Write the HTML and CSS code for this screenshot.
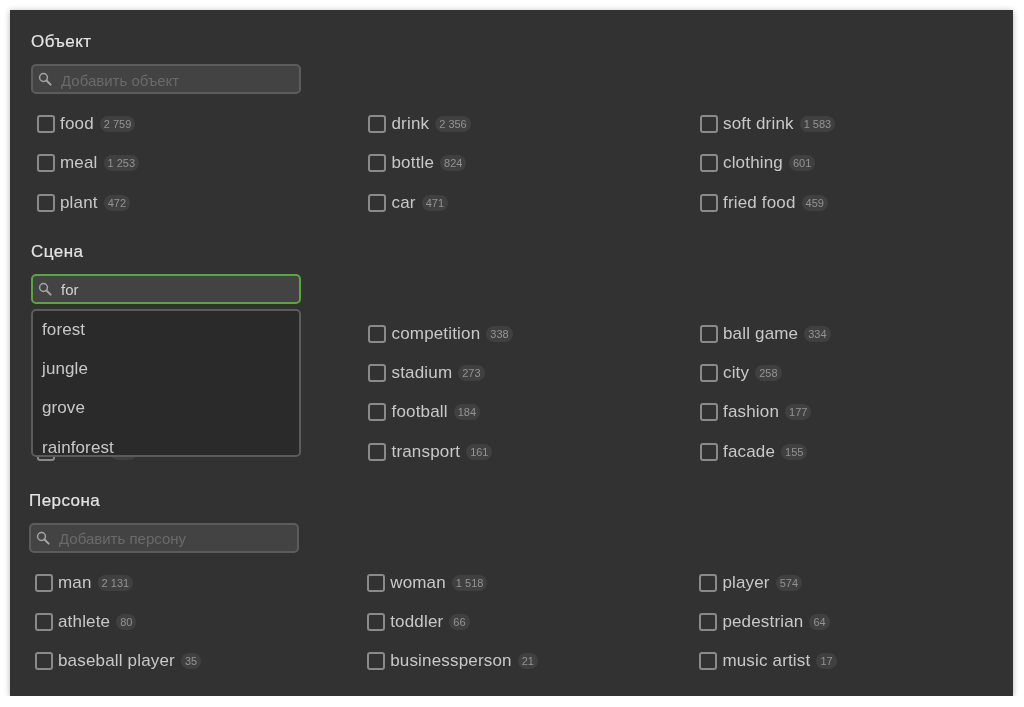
FILE: index.html
```html
<!DOCTYPE html>
<html lang="en">
<head>
    <meta charset="UTF-8">
    <meta name="viewport" content="width=device-width, initial-scale=1.0">
    <title>Фильтры</title>
    <link rel="stylesheet" href="styles.css">
</head>
<body>

    <svg class="icon-defs" width="0" height="0">
        <symbol id="search" viewBox="0 0 14 14">
            <circle cx="5.5" cy="5.5" r="3.9" fill="none" stroke="currentColor" stroke-width="1.5"/>
            <path d="M8.5 8.5 L12.6 12.6" fill="none" stroke="currentColor" stroke-width="2" stroke-linecap="round"/>
        </symbol>
    </svg>

    <div class="panel">
        <!-- Object -->
        <section class="group">
            <h2>Объект</h2>
            <div class="search">
                <svg class="search-icon"><use href="#search"/></svg>
                <input class="search-input" type="text" placeholder="Добавить объект">
            </div>
            <div class="tags">
                <label class="tag"><span class="box"></span>food<span class="count">2 759</span></label>
                <label class="tag"><span class="box"></span>drink<span class="count">2 356</span></label>
                <label class="tag"><span class="box"></span>soft drink<span class="count">1 583</span></label>
                <label class="tag"><span class="box"></span>meal<span class="count">1 253</span></label>
                <label class="tag"><span class="box"></span>bottle<span class="count">824</span></label>
                <label class="tag"><span class="box"></span>clothing<span class="count">601</span></label>
                <label class="tag"><span class="box"></span>plant<span class="count">472</span></label>
                <label class="tag"><span class="box"></span>car<span class="count">471</span></label>
                <label class="tag"><span class="box"></span>fried food<span class="count">459</span></label>
            </div>
        </section>

        <!-- Scene, the dropdown is open here -->
        <section class="group">
            <h2>Сцена</h2>
            <div class="search search-active">
                <svg class="search-icon"><use href="#search"/></svg>
                <input class="search-input" type="text" value="for">
                <ul class="dropdown">
                    <li>forest</li>
                    <li>jungle</li>
                    <li>grove</li>
                    <li>rainforest</li>
                </ul>
            </div>
            <div class="tags">
                <div class="tag"></div>
                <label class="tag"><span class="box"></span>competition<span class="count">338</span></label>
                <label class="tag"><span class="box"></span>ball game<span class="count">334</span></label>
                <div class="tag"></div>
                <label class="tag"><span class="box"></span>stadium<span class="count">273</span></label>
                <label class="tag"><span class="box"></span>city<span class="count">258</span></label>
                <div class="tag"></div>
                <label class="tag"><span class="box"></span>football<span class="count">184</span></label>
                <label class="tag"><span class="box"></span>fashion<span class="count">177</span></label>
                <label class="tag"><span class="box"></span>arena<span class="count">170</span></label>
                <label class="tag"><span class="box"></span>transport<span class="count">161</span></label>
                <label class="tag"><span class="box"></span>facade<span class="count">155</span></label>
            </div>
        </section>

        <!-- Person -->
        <section class="group group-person">
            <h2>Персона</h2>
            <div class="search">
                <svg class="search-icon"><use href="#search"/></svg>
                <input class="search-input" type="text" placeholder="Добавить персону">
            </div>
            <div class="tags">
                <label class="tag"><span class="box"></span>man<span class="count">2 131</span></label>
                <label class="tag"><span class="box"></span>woman<span class="count">1 518</span></label>
                <label class="tag"><span class="box"></span>player<span class="count">574</span></label>
                <label class="tag"><span class="box"></span>athlete<span class="count">80</span></label>
                <label class="tag"><span class="box"></span>toddler<span class="count">66</span></label>
                <label class="tag"><span class="box"></span>pedestrian<span class="count">64</span></label>
                <label class="tag"><span class="box"></span>baseball player<span class="count">35</span></label>
                <label class="tag"><span class="box"></span>businessperson<span class="count">21</span></label>
                <label class="tag"><span class="box"></span>music artist<span class="count">17</span></label>
            </div>
        </section>
    </div>

</body>
</html>
```

FILE: styles.css
```css
* {
    box-sizing: border-box;
}

body {
    margin: 0;
    background-color: #ffffff;
    font-family: "Liberation Sans", Arial, sans-serif;
    color: #c8c8c8;
}

.icon-defs {
    display: block;
    height: 0;
}

.panel {
    margin: 10px 11px 0 10px;
    height: 686px;
    padding: 21px 0 0 21px;
    background-color: #323232;
    box-shadow: 0 1px 6px rgba(0, 0, 0, 0.3);
    overflow: hidden;
    filter: blur(0.4px);
}

.group {
    margin-bottom: 18.3px;
}

.group-person {
    margin-left: -2px;
}

h2 {
    margin: 0 0 11px;
    font-size: 17px;
    line-height: 22px;
    font-weight: normal;
    letter-spacing: 0.45px;
    color: #e4e4e4;
    -webkit-text-stroke: 0.2px #e4e4e4;
}

/* Search box */
.search {
    position: relative;
    width: 270px;
    height: 30px;
    margin-bottom: 10.5px;
    background-color: #434343;
    border: 2px solid #5c5c5c;
    border-radius: 5px;
}

.search-active {
    border-color: #5aa53c;
}

.search-icon {
    position: absolute;
    left: 5px;
    top: 6px;
    width: 14px;
    height: 14px;
    color: #a4a4a4;
}

.search-input {
    display: block;
    width: 100%;
    height: 100%;
    padding: 2px 8px 0 28px;
    background: none;
    border: none;
    outline: none;
    font-family: inherit;
    font-size: 15px;
    color: #d2d2d2;
}

.search-input::placeholder {
    color: #6a6a6a;
    opacity: 1;
}

/* Open dropdown */
.dropdown {
    position: absolute;
    z-index: 2;
    left: -2px;
    top: 33px;
    width: 270px;
    height: 148px;
    margin: 0;
    padding: 0 9px;
    list-style: none;
    background-color: #2a2a2a;
    border: 2px solid #5c5c5c;
    border-radius: 5px;
    overflow: hidden;
    font-size: 17px;
    letter-spacing: 0.1px;
    color: #c8c8c8;
}

.dropdown li {
    height: 39.3px;
    line-height: 37.3px;
}

/* Checkbox grid */
.tags {
    display: grid;
    grid-template-columns: repeat(3, 331.5px);
    grid-auto-rows: 39.3px;
    padding-left: 5.5px;
}

.group-person .tags {
    grid-template-columns: repeat(3, 332.2px);
}

.tag {
    display: flex;
    align-items: center;
    font-size: 17px;
    letter-spacing: 0.17px;
    color: #c8c8c8;
}

.box {
    width: 18px;
    height: 18px;
    margin-right: 5.5px;
    border: 2px solid #8a8a8a;
    border-radius: 3px;
}

.count {
    margin-left: 6px;
    padding: 0 4px;
    height: 16px;
    line-height: 16px;
    border-radius: 8px;
    background-color: #404040;
    font-size: 11px;
    letter-spacing: 0;
    color: #939393;
}
```
